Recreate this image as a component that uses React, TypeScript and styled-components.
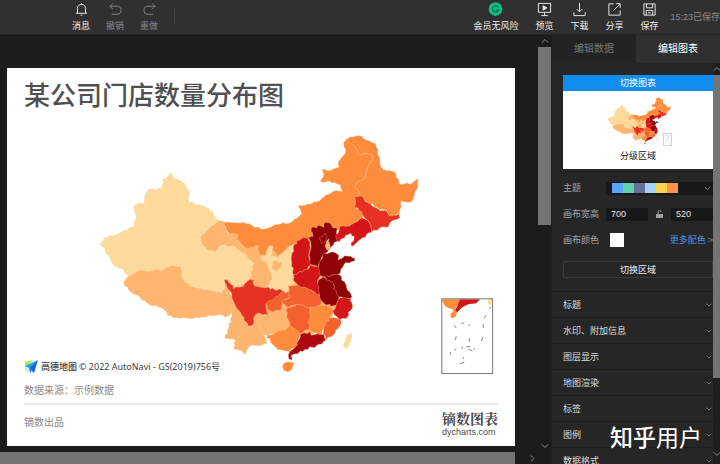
import React from 'react';
import styled, { createGlobalStyle } from 'styled-components';
import { ChevronDown, ChevronRight, ChevronUp } from 'lucide-react';

const Global = createGlobalStyle`
  * { box-sizing: border-box; }
  html, body, #root { height: 100%; margin: 0; }
  body {
    overflow: hidden;
    background: #1c1c1c;
    color: #e4e4e4;
    font-family: "Liberation Sans", "Noto Sans CJK SC", sans-serif;
    font-size: 9px;
    line-height: 12px;
  }
  button, input, select { font: inherit; color: inherit; margin: 0; padding: 0; border: 0; background: none; border-radius: 0; }
  svg { display: block; }
`;

/* ---------- map data ---------- */

type Point = [number, number];
type Region = { name: string; fill: string; points: string };

const LIGHT = '#fdd99b';
const SAND = '#feb56f';
const ORANGE = '#fd8d3d';
const CORAL = '#f5602f';
const RED = '#e53223';
const CRIMSON = '#d3151a';
const WINE = '#ad0810';
const MAROON = '#8f0207';

const regions: Region[] = [
  { name: '内蒙古', fill: ORANGE, points: '25,60 35,62 100,65 130,78 165,85 200,72 245,65 262,52 275,40 265,15 295,10 330,0 350,-18 370,-28 398,-28 392,-48 375,-55 350,-58 332,-57 342,-80 338,-95 360,-90 388,-100 388,-120 408,-145 402,-175 415,-185 435,-165 445,-140 485,-140 490,-135 465,-70 435,-45 450,-20 437,0 440,22 465,40 455,65 420,78 390,90 370,88 345,70 340,84 310,84 312,108 290,118 255,140 215,155 200,168 150,170 110,145 55,95' },
  { name: '甘肃', fill: SAND, points: '25,60 -5,85 -30,110 -25,130 -10,150 15,155 30,140 70,140 110,170 125,190 122,240 145,265 165,262 250,260 250,180 205,172 190,150 165,165 150,165 145,135 130,140 110,147 80,118 84,102 62,100 50,95 35,62' },
  { name: '西藏', fill: SAND, points: '-245,227 -215,208 -150,208 -125,198 -88,195 -82,236 -60,257 0,270 35,275 48,245 66,290 64,330 60,346 45,352 30,342 -5,345 -45,352 -90,355 -128,346 -140,328 -155,322 -190,308 -225,283 -258,258 -260,245' },
  { name: '新疆', fill: LIGHT, points: '-120,-84 -110,-68 -75,-50 -61,-25 -65,5 -25,15 0,28 16,50 25,60 -5,85 -30,110 -25,130 -35,138 -70,162 -88,195 -125,198 -150,210 -210,210 -245,230 -265,205 -290,195 -300,175 -315,155 -318,142 -332,130 -320,112 -285,105 -260,90 -227,75 -223,45 -230,15 -197,5 -195,-20 -185,-35 -145,-35 -143,-64 -130,-70' },
  { name: '青海', fill: LIGHT, points: '-35,138 -70,162 -88,195 -82,236 -60,257 0,270 35,278 48,240 75,265 120,240 125,215 132,190 110,165 90,150 70,135 30,135 15,155 -10,148 -25,130' },
  { name: '陕西', fill: LIGHT, points: '152,172 168,165 178,135 190,137 185,165 205,172 230,145 255,130 248,175 248,215 250,252 236,258 230,280 200,270 165,262 188,238 183,215 172,195' },
  { name: '固原', fill: SAND, points: '190,182 215,185 214,200 200,212 186,205' },
  { name: '云南', fill: SAND, points: '62,285 66,290 95,345 115,378 128,375 130,350 145,340 150,380 162,400 172,430 120,438 115,443 104,463 88,450 70,445 76,420 45,415 52,390 66,345 58,330' },
  { name: '贵州', fill: SAND, points: '140,350 175,345 195,330 225,335 235,370 228,390 172,405 158,398 150,380' },
  { name: '四川', fill: RED, points: '43,238 52,238 70,265 100,258 120,237 130,240 134,257 165,262 215,270 230,282 200,300 168,310 176,347 148,338 132,350 128,375 115,378 95,345 65,290 58,270' },
  { name: '重庆', fill: CORAL, points: '168,310 210,280 236,274 240,292 218,303 215,325 190,335 172,325' },
  { name: '湖北', fill: CORAL, points: '235,258 265,255 300,268 328,280 335,300 330,318 300,322 262,312 235,322 215,308 218,300 240,290' },
  { name: '湖南', fill: CORAL, points: '232,322 262,312 300,322 304,340 298,388 272,400 240,375 230,350' },
  { name: '江西', fill: ORANGE, points: '304,320 332,315 350,315 376,328 360,352 342,385 330,405 300,395 298,360' },
  { name: '福建', fill: CORAL, points: '372,352 392,358 392,375 370,405 350,418 340,400 342,380 358,352' },
  { name: '广西', fill: ORANGE, points: '172,405 228,388 240,375 272,402 265,432 240,454 215,450 190,435 180,415 170,414' },
  { name: '广东', fill: WINE, points: '272,402 300,395 305,405 342,403 348,420 320,437 285,448 252,462 244,466 246,480 237,477 235,465 240,454 262,435' },
  { name: '海南', fill: ORANGE, points: '222,490 236,485 253,487 248,503 232,515 219,505' },
  { name: '台湾', fill: LIGHT, points: '412,405 426,400 422,425 411,447 401,432' },
  { name: '山西', fill: CRIMSON, points: '262,120 295,108 302,140 296,165 302,185 292,207 250,222 245,180 250,140' },
  { name: '河南', fill: CRIMSON, points: '250,222 292,207 302,192 332,200 332,225 322,245 332,262 330,284 300,268 265,255 250,240' },
  { name: '河北', fill: MAROON, points: '305,80 320,82 325,74 343,80 345,66 362,68 370,82 382,82 380,98 390,108 384,122 370,134 358,148 352,155 332,180 326,200 300,190 298,165 304,140 296,112 310,108' },
  { name: '北京', fill: MAROON, points: '328,112 340,106 345,98 352,110 348,124 334,126' },
  { name: '天津', fill: SAND, points: '350,122 358,114 360,130 363,144 350,148 346,136' },
  { name: '山东', fill: MAROON, points: '332,180 345,158 375,156 388,165 385,178 405,166 437,174 425,184 408,186 398,202 386,222 360,228 330,225 326,202' },
  { name: '江苏', fill: MAROON, points: '340,230 386,222 405,245 414,270 427,290 405,295 385,290 372,268 370,250' },
  { name: '安徽', fill: MAROON, points: '326,240 340,230 370,248 372,265 388,290 382,318 350,314 334,300 326,270' },
  { name: '浙江', fill: CRIMSON, points: '386,295 424,292 427,325 410,355 388,358 370,334' },
  { name: '辽宁', fill: CRIMSON, points: '378,104 390,78 420,76 458,52 475,60 486,95 458,112 426,138 424,128 434,108 424,98 408,104 388,125 380,116' },
  { name: '吉林', fill: RED, points: '435,-12 455,-15 465,-2 500,22 512,30 532,30 540,45 568,40 571,52 550,60 535,80 510,82 486,95 475,60 455,32 435,20' },
  { name: '黑龙江', fill: ORANGE, points: '408,-184 420,-192 455,-195 480,-180 498,-172 510,-130 515,-100 560,-80 570,-50 600,-50 628,-66 625,-40 605,5 575,0 571,40 540,46 532,30 510,26 465,-2 455,-14 437,-12 450,-20 435,-45 465,-70 490,-135 485,-140 445,-140 435,-165' },
];

const parse = (text: string): Point[] => text.split(' ').map((p) => p.split(',').map(Number) as Point);

// Breaks each straight edge into small irregular steps. The offset depends only
// on the position, so that both sides of a shared border get the same shape.
function outline(text: string): string {
  const source = parse(text);
  const out: string[] = [];
  source.forEach((a, i) => {
    const b = source[(i + 1) % source.length];
    const length = Math.hypot(b[0] - a[0], b[1] - a[1]);
    const steps = Math.max(1, Math.round(length / 9));
    for (let s = 0; s < steps; s += 1) {
      const x = a[0] + ((b[0] - a[0]) * s) / steps;
      const y = a[1] + ((b[1] - a[1]) * s) / steps;
      const n = s === 0 ? 0 : 3;
      out.push(`${(x + Math.sin(x * 1.7 + y * 2.3) * n).toFixed(1)},${(y + Math.cos(x * 2.1 - y * 1.3) * n).toFixed(1)}`);
    }
  });
  return out.join(' ');
}

const shapes = regions.map((r) => ({ ...r, points: outline(r.points) }));
const backing = outline('60,100 200,120 300,105 350,100 345,150 330,200 385,240 395,300 370,345 335,395 270,405 230,400 150,390 100,330 60,270 100,200');

function China({ lines = 1 }: { lines?: number }) {
  return (
    <g strokeLinejoin="round">
      <polygon points={backing} fill={SAND} />
      {shapes.map((s) => (
        <polygon
          key={s.name}
          points={s.points}
          fill={s.fill}
          stroke={s.fill === LIGHT || s.fill === SAND ? '#fdcf94' : '#fbb98a'}
          strokeWidth={lines}
        />
      ))}
    </g>
  );
}

/* ---------- toolbar ---------- */

const Page = styled.div`
  height: 100vh;
  display: flex;
  flex-direction: column;
`;
const Toolbar = styled.header`
  flex: none;
  height: 35px;
  display: flex;
  justify-content: space-between;
  background: #303031;
  border-bottom: 1px solid #252525;
`;
const ToolGroup = styled.div<{ $start?: boolean }>`
  display: flex;
  align-items: flex-start;
  gap: ${(p) => (p.$start ? 16 : 17)}px;
  padding-left: ${(p) => (p.$start ? 72 : 0)}px;
`;
const Tool = styled.button<{ $dim?: boolean }>`
  display: flex;
  flex-direction: column;
  align-items: center;
  gap: 3px;
  padding-top: 2px;
  white-space: nowrap;
  color: ${(p) => (p.$dim ? '#858585' : '#eeeeee')};
`;
const Divider = styled.span`
  width: 1px;
  height: 18px;
  margin-top: 7px;
  background: #404040;
`;
const SavedAt = styled.span`
  padding-top: 11px;
  margin-left: -5px;
  color: #8c8c8c;
  white-space: nowrap;
`;

const glyphs = {
  bell: <path d="M2 12h12M3.7 12V7a4.3 4.3 0 0 1 8.6 0v5M8 2.7V1.2M7 14h2" />,
  undo: <path d="M5 1.5 2 4.5 5 7.5M2 4.5h7.6a4.3 4.3 0 0 1 0 8.6H4" />,
  redo: <path d="M11 1.5 14 4.5 11 7.5M14 4.5H6.4a4.3 4.3 0 0 0 0 8.6H12" />,
  preview: (
    <>
      <path d="M1 1.5h14M1.5 1.5v9.5h13V1.5M8 11v3.5M4.5 14.5h7" />
      <path d="m6.5 4 4 2.3-4 2.3z" fill="currentColor" />
    </>
  ),
  download: <path d="M8 1v9.5M5 7.5l3 3 3-3M2 11v3.5h12V11" />,
  share: <path d="M7 2H2v12h12V9M7 9l7-7M9.8 1.8H14v4.4" />,
  save: <path d="M2 2h12v12H2zM4.7 2v4.2h6.6V2M4.5 14V9h7v5M6.3 11.5h3.4" />,
};
function Glyph({ name }: { name: keyof typeof glyphs }) {
  return (
    <svg width="15" height="15" viewBox="0 0 16 16" fill="none" stroke="currentColor" strokeWidth="1" aria-hidden>
      {glyphs[name]}
    </svg>
  );
}

/* ---------- stage ---------- */

const Workspace = styled.div`
  flex: 1;
  min-height: 0;
  display: flex;
`;
const StageColumn = styled.main`
  flex: 1;
  min-width: 0;
  display: flex;
  flex-direction: column;
`;
const Stage = styled.div`
  flex: 1;
  min-height: 0;
  display: flex;
  padding: 33px 23px 6px 7px;
`;
const Sheet = styled.article`
  flex: 1;
  min-width: 0;
  display: flex;
  flex-direction: column;
  padding: 9px 17px 9px;
  background: #ffffff;
  color: #8a8a8a;
`;
const Title = styled.h1`
  margin: 0;
  font-size: 26px;
  line-height: 38px;
  font-weight: 500;
  color: #505050;
`;
const MapArea = styled.div`
  flex: 1;
  min-height: 0;
  position: relative;
`;
const MapDrawing = styled.svg`
  width: 100%;
  height: 100%;
`;
const Attribution = styled.div`
  position: absolute;
  left: 0;
  bottom: 6px;
  display: flex;
  align-items: center;
  gap: 2px;
  font-family: "Noto Sans", "Noto Sans CJK SC", sans-serif;
  font-size: 9px;
  line-height: 14px;
  color: #3e3e3e;
`;
const MapBrand = styled.b`
  font-weight: 500;
`;
const Source = styled.p`
  margin: 0;
  padding: 3px 0 4px;
  font-size: 10px;
  line-height: 16px;
  border-bottom: 2px solid #ececec;
`;
const SheetFooter = styled.footer`
  display: flex;
  justify-content: space-between;
  align-items: center;
  padding-top: 4px;
  font-size: 10px;
`;
const Logo = styled.div`
  display: flex;
  flex-direction: column;
  color: #4a4a4a;
  font-size: 9px;
  line-height: 10px;
`;
const LogoName = styled.strong`
  font-family: "Noto Serif CJK SC", "Noto Sans CJK SC", serif;
  font-size: 14px;
  line-height: 18px;
  font-weight: 700;
`;

/* ---------- scroll bars ---------- */

const BottomBar = styled.div`
  flex: none;
  height: 12px;
  display: flex;
  align-items: center;
  background: #1c1c1c;
  color: #8e8e8e;
`;
const BottomThumb = styled.div`
  flex: 1;
  height: 12px;
  margin-right: 12px;
  background: #747474;
`;
const SideBar = styled.div<{ $panel?: boolean }>`
  flex: none;
  width: ${(p) => (p.$panel ? 7 : 13)}px;
  display: flex;
  flex-direction: column;
  align-items: center;
  padding-bottom: ${(p) => (p.$panel ? 4 : 12)}px;
  background: ${(p) => (p.$panel ? '#1e1e1e' : '#1b1b1b')};
  color: #8e8e8e;
`;
const SideThumb = styled.div<{ $share: number }>`
  width: 100%;
  flex: ${(p) => p.$share} 1 0;
  background: #747474;
`;
const SideTrack = styled.div<{ $share: number }>`
  flex: ${(p) => p.$share} 1 0;
`;

/* ---------- panel ---------- */

const Panel = styled.aside`
  flex: none;
  width: 169px;
  display: flex;
  flex-direction: column;
  background: #262626;
  border-left: 1px solid #1e1e1e;
`;
const Tabs = styled.div`
  flex: none;
  display: flex;
  height: 28px;
`;
const Tab = styled.button<{ $active?: boolean }>`
  flex: 1;
  font-size: 10px;
  background: ${(p) => (p.$active ? '#303031' : '#232323')};
  color: ${(p) => (p.$active ? '#ffffff' : '#777777')};
`;
const PanelBody = styled.div`
  flex: 1;
  min-height: 0;
  display: flex;
`;
const PanelContent = styled.div`
  flex: 1;
  min-width: 0;
  overflow: hidden;
`;
const Settings = styled.div`
  padding: 12px 0 13px 11px;
`;
const TypeCard = styled.button`
  width: 100%;
  display: flex;
  flex-direction: column;
  align-items: stretch;
  padding-bottom: 7px;
  background: #ffffff;
  color: #222222;
`;
const CardHead = styled.span`
  line-height: 16px;
  background: #118df0;
  color: #ffffff;
`;
const Thumb = styled.svg`
  width: 100%;
  height: 59px;
`;
const Fields = styled.div`
  margin-top: 3px;
  padding-top: 2px;
  border-top: 1px solid #1e1e1e;
`;
const Field = styled.div`
  height: 26px;
  display: grid;
  grid-template-columns: 43px 1fr;
  align-items: center;
  color: #a5a5a5;
`;
const FieldControls = styled.div`
  display: flex;
  align-items: center;
  justify-content: space-between;
`;
const ThemePicker = styled.button`
  height: 13px;
  display: flex;
  align-items: center;
  justify-content: space-between;
  padding: 0 1px 0 6px;
  background: #181818;
`;
const Swatches = styled.span`
  display: flex;
`;
const Swatch = styled.span<{ $color: string }>`
  width: 11px;
  height: 10px;
  background: ${(p) => p.$color};
`;
const SizeInput = styled.input`
  width: 42px;
  height: 13px;
  padding-left: 5px;
  background: #181818;
  color: #e6e6e6;
`;
const ColorInput = styled.input`
  width: 14px;
  height: 14px;
  margin-left: 4px;
  &::-webkit-color-swatch-wrapper { padding: 0; }
  &::-webkit-color-swatch { border: 0; }
`;
const MoreLink = styled.a`
  display: flex;
  gap: 2px;
  color: #4c93e8;
  text-decoration: none;
`;
const MoreMark = styled.span`
  color: #888888;
`;
const SwitchArea = styled.button`
  width: 100%;
  height: 17px;
  margin-top: 8px;
  border: 1px solid #3a3a3a;
  color: #eeeeee;
`;
const Section = styled.button`
  width: 100%;
  height: 26px;
  display: flex;
  align-items: center;
  justify-content: space-between;
  padding-left: 11px;
  border-top: 1px solid #1d1d1d;
  color: #dedede;
  svg { color: #999999; }
`;
const Watermark = styled.div`
  position: absolute;
  right: 18px;
  bottom: 12px;
  font-size: 23px;
  line-height: 28px;
  font-weight: 400;
  color: #ffffff;
`;
const WatermarkBrand = styled.b`
  font-weight: 500;
`;

const palette = ['#56a6f5', '#5ed3a6', '#65709a', '#a5d3f7', '#fcd34c', '#fc944e'];
const sections = ['标题', '水印、附加信息', '图层显示', '地图渲染', '标签', '图例', '数据格式'];
const islands = [
  '455,325 457,328', '462,323 465,323', '469,325 471,325', '487,315 485,318', '484,324 484,328',
  '484,337 482,341', '457,336 456,340', '470,338 470,342', '467,347 471,346', '469,349 473,351',
  '474,350 476,348', '462,348 464,347', '455,350 457,349', '451,352 451,355', '464,357 464,359',
  '461,364 465,362', '492,306 490,309',
];

export default function App() {
  return (
    <Page>
      <Global />
      <Toolbar>
        <ToolGroup $start>
          <Tool><Glyph name="bell" />消息</Tool>
          <Tool $dim><Glyph name="undo" />撤销</Tool>
          <Tool $dim><Glyph name="redo" />重做</Tool>
          <Divider />
        </ToolGroup>
        <ToolGroup>
          <Tool>
            <svg width="15" height="15" viewBox="0 0 16 16" aria-hidden>
              <circle cx="8" cy="7.5" r="7.3" fill="#12bd7e" />
              <path d="M10.8 5.4a3.3 3.3 0 1 0 .4 3.3H8.4" fill="none" stroke="#087350" strokeWidth="1.3" />
            </svg>
            会员无风险
          </Tool>
          <Tool><Glyph name="preview" />预览</Tool>
          <Tool><Glyph name="download" />下载</Tool>
          <Tool><Glyph name="share" />分享</Tool>
          <Tool><Glyph name="save" />保存</Tool>
          <SavedAt>15:23已保存</SavedAt>
        </ToolGroup>
      </Toolbar>

      <Workspace>
        <StageColumn>
          <Stage>
            <Sheet>
              <Title>某公司门店数量分布图</Title>
              <MapArea>
                <MapDrawing viewBox="24 114 474 266" role="img" aria-label="某公司门店数量分布图">
                  <g transform="translate(210 200) scale(.3333)">
                    <China />
                  </g>
                  <g>
                    <path d="M443 299h18l1 4-4 3-2 2 2 4-2 5-4 1-1-4 3-3v-2l-4-1-4-2-3-5z" fill={ORANGE} />
                    <path d="M461 299h20l-4 4-8 1-6 3-5 5-2-2 2-4z" fill={CRIMSON} />
                    <path d="M489 299h4l-1 6-3-1z" fill={LIGHT} />
                    {islands.map((p) => (
                      <polyline key={p} points={p} stroke="#8b8b8b" strokeWidth="1" fill="none" />
                    ))}
                    <rect x="442.5" y="298.5" width="51" height="75" fill="none" stroke="#777777" />
                  </g>
                </MapDrawing>
                <Attribution>
                  <svg width="15" height="15" viewBox="0 0 15 15" aria-hidden>
                    <path d="M1 2h11v11H1z" fill="#c9f3df" />
                    <path d="M1 3 9 1 4 6 1 9z" fill="#b8e64a" />
                    <path d="M14 1 1 7l4 2z" fill="#23a4f5" />
                    <path d="M14 1 5 9l5 5z" fill="#1467dc" />
                    <path d="m5 9 1 5 2-3z" fill="#2b8cf0" />
                  </svg>
                  <MapBrand>高德地图</MapBrand>
                  <span>© 2022 AutoNavi - GS(2019)756号</span>
                </Attribution>
              </MapArea>
              <Source>数据来源：示例数据</Source>
              <SheetFooter>
                <span>镝数出品</span>
                <Logo>
                  <LogoName>镝数图表</LogoName>
                  <span>dycharts.com</span>
                </Logo>
              </SheetFooter>
            </Sheet>
          </Stage>
          <BottomBar>
            <BottomThumb />
            <ChevronRight size={11} />
          </BottomBar>
        </StageColumn>

        <SideBar>
          <ChevronUp size={12} />
          <SideThumb $share={178} />
          <SideTrack $share={216} />
          <ChevronDown size={12} />
        </SideBar>

        <Panel>
          <Tabs role="tablist">
            <Tab role="tab" aria-selected={false}>编辑数据</Tab>
            <Tab role="tab" aria-selected $active>编辑图表</Tab>
          </Tabs>
          <PanelBody>
            <PanelContent>
              <Settings>
                <TypeCard>
                  <CardHead>切换图表</CardHead>
                  <Thumb viewBox="563 91 150 59" aria-hidden>
                    <g transform="translate(629.5 110.5) scale(.066)">
                      <China lines={0} />
                    </g>
                    <rect x="663.5" y="133.5" width="8" height="12" fill="#faf8ff" stroke="#d5d2df" />
                    <path d="m665 135 4 1-2 4" fill="none" stroke="#e0dde8" />
                  </Thumb>
                  <span>分级区域</span>
                </TypeCard>
                <Fields>
                  <Field>
                    <span>主题</span>
                    <ThemePicker aria-label="主题">
                      <Swatches>
                        {palette.map((c) => <Swatch key={c} $color={c} />)}
                      </Swatches>
                      <ChevronDown size={9} />
                    </ThemePicker>
                  </Field>
                  <Field>
                    <label htmlFor="sheet-width">画布宽高</label>
                    <FieldControls>
                      <SizeInput id="sheet-width" defaultValue="700" />
                      <svg width="7" height="8" viewBox="0 0 7 8" aria-hidden>
                        <path d="M0 4h7v4H0z" fill="#a0a0a0" />
                        <path d="M2 4V2a1.5 1.5 0 0 1 3 0" fill="none" stroke="#a0a0a0" />
                      </svg>
                      <SizeInput aria-label="画布高" defaultValue="520" />
                    </FieldControls>
                  </Field>
                  <Field>
                    <label htmlFor="sheet-color">画布颜色</label>
                    <FieldControls>
                      <ColorInput id="sheet-color" type="color" defaultValue="#ffffff" />
                      <MoreLink href="#palettes">更多配色<MoreMark>&gt;</MoreMark></MoreLink>
                    </FieldControls>
                  </Field>
                </Fields>
                <SwitchArea>切换区域</SwitchArea>
              </Settings>
              {sections.map((s) => (
                <Section key={s}>
                  {s}
                  <ChevronDown size={8} />
                </Section>
              ))}
            </PanelContent>
            <SideBar $panel>
              <ChevronUp size={12} />
              <SideThumb $share={305} />
              <SideTrack $share={70} />
              <ChevronDown size={12} />
            </SideBar>
          </PanelBody>
        </Panel>
      </Workspace>
      <Watermark><WatermarkBrand>知乎</WatermarkBrand>用户</Watermark>
    </Page>
  );
}
